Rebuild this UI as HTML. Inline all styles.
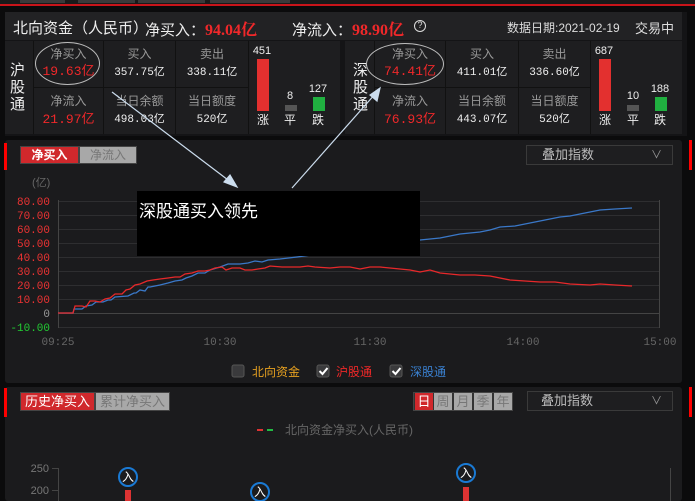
<!DOCTYPE html><html><head><meta charset="utf-8"><style>
*{margin:0;padding:0;box-sizing:border-box}
body{width:695px;height:501px;background:#0b0b0c;font-family:"Liberation Sans","Noto Sans CJK SC",sans-serif;position:relative;overflow:hidden;color:#ddd}
.a{position:absolute;white-space:nowrap}
.v{white-space:normal;word-break:break-all}
.p{position:absolute;background:#1b1b1d}
.c{position:absolute;text-align:center;font-size:12px;line-height:14px}
.mono{font-family:"Liberation Mono","Noto Sans CJK SC",monospace}
.r{color:#f0282a}
</style></head><body>
<div class="a" style="left:0;top:0;width:695px;height:4px;background:#1a1a1a"></div>
<div class="a" style="left:20px;top:0;width:45px;height:3px;background:#3a3a3a"></div>
<div class="a" style="left:78px;top:0;width:57px;height:3px;background:#3a3a3a"></div>
<div class="a" style="left:138px;top:0;width:67px;height:3px;background:#3a3a3a"></div>
<div class="a" style="left:210px;top:0;width:80px;height:3px;background:#3a3a3a"></div>
<div class="a" style="left:0;top:4px;width:695px;height:2px;background:#c8141a"></div>
<div class="p" style="left:5px;top:12px;width:682px;height:124px;background:#141416"></div>
<div class="a" style="left:5px;top:12px;width:677px;height:28px;background:#222224"></div>
<div class="a" style="left:13px;top:17px;font-size:15px;color:#eee">北向资金（人民币）</div>
<div class="a" style="left:145px;top:17px;font-size:15px;color:#eee">净买入：<b class="r" style="font-family:'Liberation Serif','Noto Serif CJK SC',serif;font-size:16px">94.04亿</b></div>
<div class="a" style="left:292px;top:17px;font-size:15px;color:#eee">净流入：<b class="r" style="font-family:'Liberation Serif','Noto Serif CJK SC',serif;font-size:16px">98.90亿</b></div>
<div class="a" style="left:414px;top:20px;width:12px;height:12px;border:1.5px solid #ddd;border-radius:50%;font-size:9px;line-height:9px;text-align:center;color:#ddd">?</div>
<div class="a" style="left:507px;top:19px;font-size:12px;color:#ddd">数据日期:2021-02-19</div>
<div class="a" style="left:635px;top:18px;font-size:13px;color:#ddd">交易中</div>
<div class="a" style="left:5px;top:41px;width:335px;height:93px;background:#1e1e20"></div>
<div class="a" style="left:33px;top:41px;width:1px;height:93px;background:#111"></div>
<div class="a" style="left:103px;top:41px;width:1px;height:93px;background:#111"></div>
<div class="a" style="left:175px;top:41px;width:1px;height:93px;background:#111"></div>
<div class="a" style="left:248px;top:41px;width:1px;height:93px;background:#111"></div>
<div class="a" style="left:33px;top:87px;width:215px;height:1px;background:#111"></div>
<div class="a v" style="left:10px;top:62px;width:16px;font-size:15px;line-height:17px;color:#eee">沪<br>股<br>通</div>
<div class="c" style="left:34px;top:47px;width:69px;color:#999">净买入</div>
<div class="c mono r" style="left:34px;top:65px;width:69px;font-size:13px">19.63亿</div>
<div class="a" style="left:35px;top:42px;width:65px;height:43px;border:1px solid #bbb;border-radius:50%"></div>
<div class="c" style="left:104px;top:47px;width:71px;color:#999">买入</div>
<div class="c mono" style="left:104px;top:66px;width:71px;font-size:11px;color:#eee">357.75亿</div>
<div class="c" style="left:176px;top:47px;width:72px;color:#999">卖出</div>
<div class="c mono" style="left:176px;top:66px;width:72px;font-size:11px;color:#eee">338.11亿</div>
<div class="c" style="left:34px;top:94px;width:69px;color:#999">净流入</div>
<div class="c mono r" style="left:34px;top:113px;width:69px;font-size:13px">21.97亿</div>
<div class="c" style="left:104px;top:94px;width:71px;color:#999">当日余额</div>
<div class="c mono" style="left:104px;top:113px;width:71px;font-size:11px;color:#eee">498.03亿</div>
<div class="c" style="left:176px;top:94px;width:72px;color:#999">当日额度</div>
<div class="c mono" style="left:176px;top:113px;width:72px;font-size:11px;color:#eee">520亿</div>
<div class="c" style="left:252px;top:44px;width:20px;font-size:11px;color:#eee">451</div>
<div class="a" style="left:257px;top:59px;width:12px;height:52px;background:#e3302f"></div>
<div class="c" style="left:255px;top:113px;width:16px;color:#eee">涨</div>
<div class="c" style="left:282px;top:89px;width:16px;font-size:11px;color:#eee">8</div>
<div class="a" style="left:285px;top:105px;width:12px;height:6px;background:#555"></div>
<div class="c" style="left:282px;top:113px;width:16px;color:#eee">平</div>
<div class="c" style="left:308px;top:82px;width:20px;font-size:11px;color:#eee">127</div>
<div class="a" style="left:313px;top:97px;width:12px;height:14px;background:#20b040"></div>
<div class="c" style="left:310px;top:113px;width:16px;color:#eee">跌</div>
<div class="a" style="left:345px;top:41px;width:337px;height:93px;background:#1e1e20"></div>
<div class="a" style="left:374px;top:41px;width:1px;height:93px;background:#111"></div>
<div class="a" style="left:445px;top:41px;width:1px;height:93px;background:#111"></div>
<div class="a" style="left:518px;top:41px;width:1px;height:93px;background:#111"></div>
<div class="a" style="left:590px;top:41px;width:1px;height:93px;background:#111"></div>
<div class="a" style="left:374px;top:87px;width:216px;height:1px;background:#111"></div>
<div class="a v" style="left:353px;top:62px;width:16px;font-size:15px;line-height:17px;color:#eee">深<br>股<br>通</div>
<div class="c" style="left:375px;top:47px;width:70px;color:#999">净买入</div>
<div class="c mono r" style="left:375px;top:65px;width:70px;font-size:13px">74.41亿</div>
<div class="a" style="left:366px;top:43px;width:78px;height:42px;border:1px solid #bbb;border-radius:50%"></div>
<div class="c" style="left:446px;top:47px;width:72px;color:#999">买入</div>
<div class="c mono" style="left:446px;top:66px;width:72px;font-size:11px;color:#eee">411.01亿</div>
<div class="c" style="left:519px;top:47px;width:71px;color:#999">卖出</div>
<div class="c mono" style="left:519px;top:66px;width:71px;font-size:11px;color:#eee">336.60亿</div>
<div class="c" style="left:375px;top:94px;width:70px;color:#999">净流入</div>
<div class="c mono r" style="left:375px;top:113px;width:70px;font-size:13px">76.93亿</div>
<div class="c" style="left:446px;top:94px;width:72px;color:#999">当日余额</div>
<div class="c mono" style="left:446px;top:113px;width:72px;font-size:11px;color:#eee">443.07亿</div>
<div class="c" style="left:519px;top:94px;width:71px;color:#999">当日额度</div>
<div class="c mono" style="left:519px;top:113px;width:71px;font-size:11px;color:#eee">520亿</div>
<div class="c" style="left:594px;top:44px;width:20px;font-size:11px;color:#eee">687</div>
<div class="a" style="left:599px;top:59px;width:12px;height:52px;background:#e3302f"></div>
<div class="c" style="left:597px;top:113px;width:16px;color:#eee">涨</div>
<div class="c" style="left:623px;top:89px;width:20px;font-size:11px;color:#eee">10</div>
<div class="a" style="left:627px;top:105px;width:12px;height:6px;background:#555"></div>
<div class="c" style="left:625px;top:113px;width:16px;color:#eee">平</div>
<div class="c" style="left:650px;top:82px;width:20px;font-size:11px;color:#eee">188</div>
<div class="a" style="left:655px;top:97px;width:12px;height:14px;background:#20b040"></div>
<div class="c" style="left:652px;top:113px;width:16px;color:#eee">跌</div>
<div class="p" style="left:5px;top:140px;width:677px;height:243px;border-radius:3px"></div>
<div class="a" style="left:4px;top:143px;width:3px;height:27px;background:#f00"></div>
<div class="a" style="left:689px;top:140px;width:3px;height:30px;background:#f00"></div>
<div class="a" style="left:20px;top:146px;width:59px;height:18px;background:#d0282c;border:1px solid #444;color:#fff;font-size:12px;font-weight:bold;text-align:center;line-height:16px">净买入</div>
<div class="a" style="left:79px;top:146px;width:58px;height:18px;background:#a8a8a8;border:1px solid #444;color:#777;font-size:12px;text-align:center;line-height:16px">净流入</div>
<div class="a" style="left:526px;top:145px;width:147px;height:20px;border:1px solid #3a3a3a;background:#1e1e20;color:#bbb;font-size:13px;line-height:18px;padding-left:15px">叠加指数<span style="position:absolute;right:10px;color:#999;font-size:11px">∨</span></div>
<div class="a" style="left:32px;top:174px;font-size:11px;color:#666">(亿)</div>
<svg class="a" style="left:0;top:0" width="695" height="501">
<g stroke="#2e2e30" stroke-width="1">
<line x1="58" y1="201.5" x2="660" y2="201.5"/><line x1="58" y1="215.5" x2="660" y2="215.5"/><line x1="58" y1="229.5" x2="660" y2="229.5"/><line x1="58" y1="243.5" x2="660" y2="243.5"/><line x1="58" y1="257.5" x2="660" y2="257.5"/><line x1="58" y1="271.5" x2="660" y2="271.5"/><line x1="58" y1="285.5" x2="660" y2="285.5"/><line x1="58" y1="299.5" x2="660" y2="299.5"/><line x1="58" y1="327.5" x2="660" y2="327.5"/>
</g>
<line x1="58" y1="313.5" x2="660" y2="313.5" stroke="#444"/>
<line x1="58.5" y1="200" x2="58.5" y2="328" stroke="#444"/>
<line x1="659.5" y1="200" x2="659.5" y2="328" stroke="#444"/>
<g font-family="Liberation Mono,monospace" font-size="11" text-anchor="end">
<text x="50" y="205" fill="#e33">80.00</text><text x="50" y="219" fill="#e33">70.00</text><text x="50" y="233" fill="#e33">60.00</text><text x="50" y="247" fill="#e33">50.00</text><text x="50" y="261" fill="#e33">40.00</text><text x="50" y="275" fill="#e33">30.00</text><text x="50" y="289" fill="#e33">20.00</text><text x="50" y="303" fill="#e33">10.00</text><text x="50" y="317" fill="#999">0</text><text x="50" y="331" fill="#2c3">-10.00</text>
</g>
<g font-family="Liberation Mono,monospace" font-size="11" fill="#666" text-anchor="middle">
<text x="58" y="345">09:25</text><text x="220" y="345">10:30</text><text x="370" y="345">11:30</text><text x="523" y="345">14:00</text><text x="660" y="345">15:00</text>
</g>
<polyline fill="none" stroke="#3a78c8" stroke-width="1.3" points="58,313 73,313 74,309 82,309 86,306 92,305 96,302 103,302 108,300 111,300 115,297 128,296 134,293 136,293 140,290 145,291 148,287 150,287 155,286 160,285 168,283 175,281 182,280 186,278 192,276 198,273 205,273 210,270 220,267 228,264 240,264 248,263 255,261 262,262 268,260 280,259 297,257 420,240 430,239 440,238 450,236 460,234 480,232 490,230 500,227 515,226 530,223 545,220 560,217 570,216 580,214 600,210 615,209 632,208"/>
<polyline fill="none" stroke="#e8282a" stroke-width="1.3" points="58,313 73,313 75,306 82,306 86,307 90,301 95,301 100,302 105,299 110,298 115,294 122,294 126,290 130,289 135,285 140,284 147,281 153,280 160,279 168,278 175,277 180,277 185,274 192,273 198,271 205,271 210,270 215,268 222,267 226,270 232,268 240,268 245,270 252,270 258,269 265,268 270,266 282,267 290,267 300,267 308,266 315,267 330,268 340,267 350,267 360,269 370,267 380,267 400,269 410,270 420,272 430,270 440,273 450,274 460,275 475,275 490,276 510,280 525,281 540,282 555,282 570,284 590,285 600,284 615,285 632,286"/>
<rect x="137" y="191" width="283" height="65" fill="#000"/>
<text x="139" y="217" font-size="17" fill="#fff" font-family="Liberation Sans,Noto Sans CJK SC,sans-serif">深股通买入领先</text>
<g stroke="#cde" stroke-width="1.2" fill="#cde">
<line x1="112" y1="92" x2="232" y2="183"/><polygon points="237,187 224,182 230,175"/>
<line x1="292" y1="188" x2="376" y2="93"/><polygon points="380,88 377,101 370,95"/>
</g>
<rect x="232" y="365" width="12" height="12" rx="2" fill="#3a3a3c" stroke="#555"/>
<rect x="317" y="365" width="12" height="12" rx="2" fill="#3a3a3c" stroke="#555"/>
<path d="M319.5 371 l3 3 l5 -6" stroke="#fff" stroke-width="2" fill="none"/>
<rect x="390" y="365" width="12" height="12" rx="2" fill="#3a3a3c" stroke="#555"/>
<path d="M392.5 371 l3 3 l5 -6" stroke="#fff" stroke-width="2" fill="none"/>
<g font-family="Liberation Sans,Noto Sans CJK SC,sans-serif" font-size="12">
<text x="252" y="376" fill="#e6a020">北向资金</text><text x="336" y="376" fill="#f02828">沪股通</text><text x="410" y="376" fill="#3a80d0">深股通</text>
</g>
</svg>
<div class="p" style="left:5px;top:387px;width:677px;height:114px;border-radius:3px"></div>
<div class="a" style="left:4px;top:388px;width:3px;height:29px;background:#f00"></div>
<div class="a" style="left:689px;top:387px;width:3px;height:30px;background:#f00"></div>
<div class="a" style="left:20px;top:392px;width:75px;height:19px;background:#d0282c;border:1px solid #444;color:#fff;font-size:13px;text-align:center;line-height:17px">历史净买入</div>
<div class="a" style="left:95px;top:392px;width:75px;height:19px;background:#a8a8a8;border:1px solid #444;color:#777;font-size:13px;text-align:center;line-height:17px">累计净买入</div>
<div class="a" style="left:413px;top:392px;width:100px;height:19px;background:#333;border:1px solid #444"></div>
<div class="a" style="left:415px;top:393px;width:18px;height:17px;background:#d0282c;color:#fff;font-size:13px;text-align:center;line-height:17px">日</div>
<div class="a" style="left:434px;top:393px;width:18px;height:17px;background:#a8a8a8;color:#777;font-size:13px;text-align:center;line-height:17px">周</div>
<div class="a" style="left:454px;top:393px;width:18px;height:17px;background:#a8a8a8;color:#777;font-size:13px;text-align:center;line-height:17px">月</div>
<div class="a" style="left:474px;top:393px;width:18px;height:17px;background:#a8a8a8;color:#777;font-size:13px;text-align:center;line-height:17px">季</div>
<div class="a" style="left:494px;top:393px;width:18px;height:17px;background:#a8a8a8;color:#777;font-size:13px;text-align:center;line-height:17px">年</div>
<div class="a" style="left:527px;top:391px;width:146px;height:20px;border:1px solid #3a3a3a;background:#1e1e20;color:#bbb;font-size:13px;line-height:18px;padding-left:13px">叠加指数<span style="position:absolute;right:10px;color:#999;font-size:11px">∨</span></div>
<svg class="a" style="left:0;top:0" width="695" height="501">
<line x1="257" y1="430" x2="263" y2="430" stroke="#d33" stroke-width="2"/><line x1="267" y1="430" x2="273" y2="430" stroke="#2b4" stroke-width="2"/>
<text x="285" y="434" font-size="12" fill="#666" font-family="Liberation Sans,Noto Sans CJK SC,sans-serif">北向资金净买入(人民币)</text>
<g font-size="11" fill="#777" font-family="Liberation Sans,sans-serif" text-anchor="end"><text x="49" y="472">250</text><text x="49" y="494">200</text></g>
<line x1="58.5" y1="468" x2="58.5" y2="501" stroke="#444"/><line x1="52" y1="468.5" x2="58" y2="468.5" stroke="#444"/><line x1="52" y1="490.5" x2="58" y2="490.5" stroke="#444"/>
<line x1="670.5" y1="468" x2="670.5" y2="501" stroke="#444"/>
<rect x="125" y="490" width="6" height="11" fill="#d33"/><rect x="463" y="487" width="6" height="14" fill="#d33"/>
<g fill="#1b1b1d" stroke="#1a7ad4" stroke-width="2">
<circle cx="128" cy="477" r="9"/><circle cx="260" cy="492" r="9"/><circle cx="466" cy="473" r="9"/></g>
<g font-size="12" fill="#fff" text-anchor="middle" font-family="Liberation Sans,Noto Sans CJK SC,sans-serif"><text x="128" y="481">入</text><text x="260" y="496">入</text><text x="466" y="477">入</text></g>
</svg>
</body></html>
